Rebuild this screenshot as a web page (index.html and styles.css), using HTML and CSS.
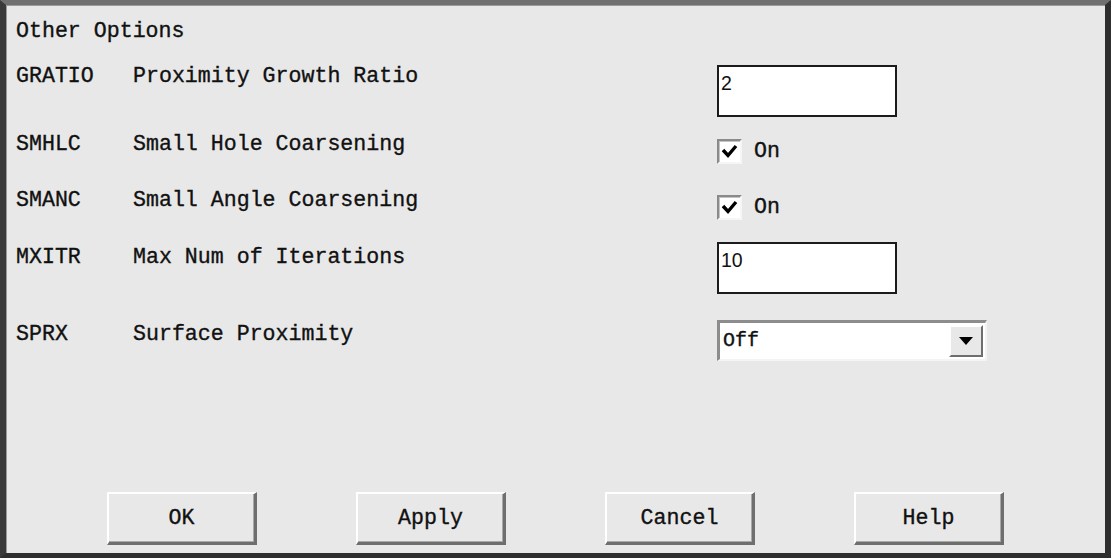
FILE: index.html
```html
<!DOCTYPE html>
<html lang="en">
<head>
  <meta charset="UTF-8" />
  <title>Other Options</title>
  <link rel="stylesheet" href="styles.css">
</head>
<body>
  <div class="dialog">
    <div class="form">
      <div class="title">Other Options</div>

      <div class="row row-gratio">
        <span class="code">GRATIO</span>
        <span class="label">Proximity Growth Ratio</span>
        <div class="control"><input class="field" type="text" value="2"></div>
      </div>

      <div class="row row-smhlc">
        <span class="code">SMHLC</span>
        <span class="label">Small Hole Coarsening</span>
        <div class="control">
          <label class="check">
            <span class="box">
              <svg width="21" height="21" viewBox="0 0 21 21"><polyline points="4,9 9,14.5 17,5" fill="none" stroke="#000" stroke-width="3.4"/></svg>
            </span>
            <span>On</span>
          </label>
        </div>
      </div>

      <div class="row row-smanc">
        <span class="code">SMANC</span>
        <span class="label">Small Angle Coarsening</span>
        <div class="control">
          <label class="check">
            <span class="box">
              <svg width="21" height="21" viewBox="0 0 21 21"><polyline points="4,9 9,14.5 17,5" fill="none" stroke="#000" stroke-width="3.4"/></svg>
            </span>
            <span>On</span>
          </label>
        </div>
      </div>

      <div class="row row-mxitr">
        <span class="code">MXITR</span>
        <span class="label">Max Num of Iterations</span>
        <div class="control"><input class="field" type="text" value="10"></div>
      </div>

      <div class="row row-sprx">
        <span class="code">SPRX</span>
        <span class="label">Surface Proximity</span>
        <div class="control">
          <div class="select">
            <span class="select-value">Off</span>
            <span class="select-btn">
              <svg width="14" height="8" viewBox="0 0 14 8"><polygon points="0,0 14,0 7,8" fill="#000"/></svg>
            </span>
          </div>
        </div>
      </div>
    </div>

    <div class="buttons">
      <button class="btn">OK</button>
      <button class="btn">Apply</button>
      <button class="btn">Cancel</button>
      <button class="btn">Help</button>
    </div>
  </div>
</body>
</html>
```

FILE: styles.css
```css
:root {
  --face: #e8e8e8;
  --ink: #111;
  --shadow: #6e6e6e;
  --dark: #3a3a3a;
}

* {
  box-sizing: border-box;
}

body {
  margin: 0;
  background: var(--face);
  font-family: 'Liberation Mono', 'DejaVu Sans Mono', monospace;
  font-size: 21.6px;
  color: var(--ink);
  -webkit-text-stroke: 0.35px #111;
}

.dialog {
  width: 1111px;
  height: 558px;
  display: flex;
  flex-direction: column;
  background: var(--face);
  border-top: 5px solid #707070;
  border-left: 6px solid var(--dark);
  border-right: 6px solid #2e2e2e;
  border-bottom: 5px solid #2e2e2e;
  box-shadow: inset 1px 1px 0 #9a9a9a;
}

.form {
  padding: 13px 0 0 10px;
}

.title {
  height: 45px;
  line-height: 26px;
}

.row {
  display: grid;
  grid-template-columns: 117px 584px 1fr;
  align-items: start;
  line-height: 26px;
  white-space: nowrap;
}

.row-gratio { height: 68px; }
.row-smhlc  { height: 56px; }
.row-smanc  { height: 57px; }
.row-mxitr  { height: 77px; }
.row-sprx   { height: 60px; }

.control {
  display: flex;
}

.field {
  width: 180px;
  height: 52px;
  margin: 2px 0 0;
  padding: 4px 3px 20px 2px;
  border: 2px solid #1b1b1b;
  background: #fff;
  font-family: 'Liberation Sans', Arial, sans-serif;
  font-size: 19.5px;
  color: #111;
  -webkit-text-stroke: 0;
  outline: none;
}

.row-mxitr .field {
  margin-top: -2px;
}

.check {
  display: flex;
  align-items: center;
  gap: 12px;
  margin-top: 7px;
}

.box {
  width: 25px;
  height: 25px;
  display: flex;
  align-items: center;
  justify-content: center;
  background: #fff;
  border-top: 2px solid #8a8a8a;
  border-left: 2px solid #8a8a8a;
  border-right: 2px solid #f6f6f6;
  border-bottom: 2px solid #f6f6f6;
  box-shadow: inset 1px 1px 0 #c4c4c4;
}

.select {
  width: 270px;
  height: 41px;
  margin-top: -1px;
  display: flex;
  align-items: center;
  justify-content: space-between;
  background: #fff;
  border-top: 3px solid #8c8c8c;
  border-left: 3px solid #8c8c8c;
  border-right: 2px solid #f4f4f4;
  border-bottom: 2px solid #f4f4f4;
}

.select-value {
  padding-left: 3px;
  font-size: 20px;
}

.select-btn {
  width: 34px;
  height: 32px;
  margin-right: 2px;
  display: flex;
  align-items: center;
  justify-content: center;
  background: var(--face);
  border-top: 2px solid #fff;
  border-left: 2px solid #fff;
  border-right: 2px solid var(--shadow);
  border-bottom: 2px solid var(--shadow);
}

.buttons {
  margin-top: auto;
  padding-bottom: 8px;
  display: flex;
  justify-content: center;
  gap: 99px;
}

.btn {
  width: 150px;
  height: 53px;
  padding: 0;
  background: var(--face);
  font-family: inherit;
  font-size: 21.6px;
  color: var(--ink);
  -webkit-text-stroke: inherit;
  border-top: 2px solid #fff;
  border-left: 2px solid #fff;
  border-right: 3px solid var(--shadow);
  border-bottom: 3px solid var(--shadow);
  box-shadow: inset -1px -1px 0 #a8a8a8;
  cursor: pointer;
}
```
